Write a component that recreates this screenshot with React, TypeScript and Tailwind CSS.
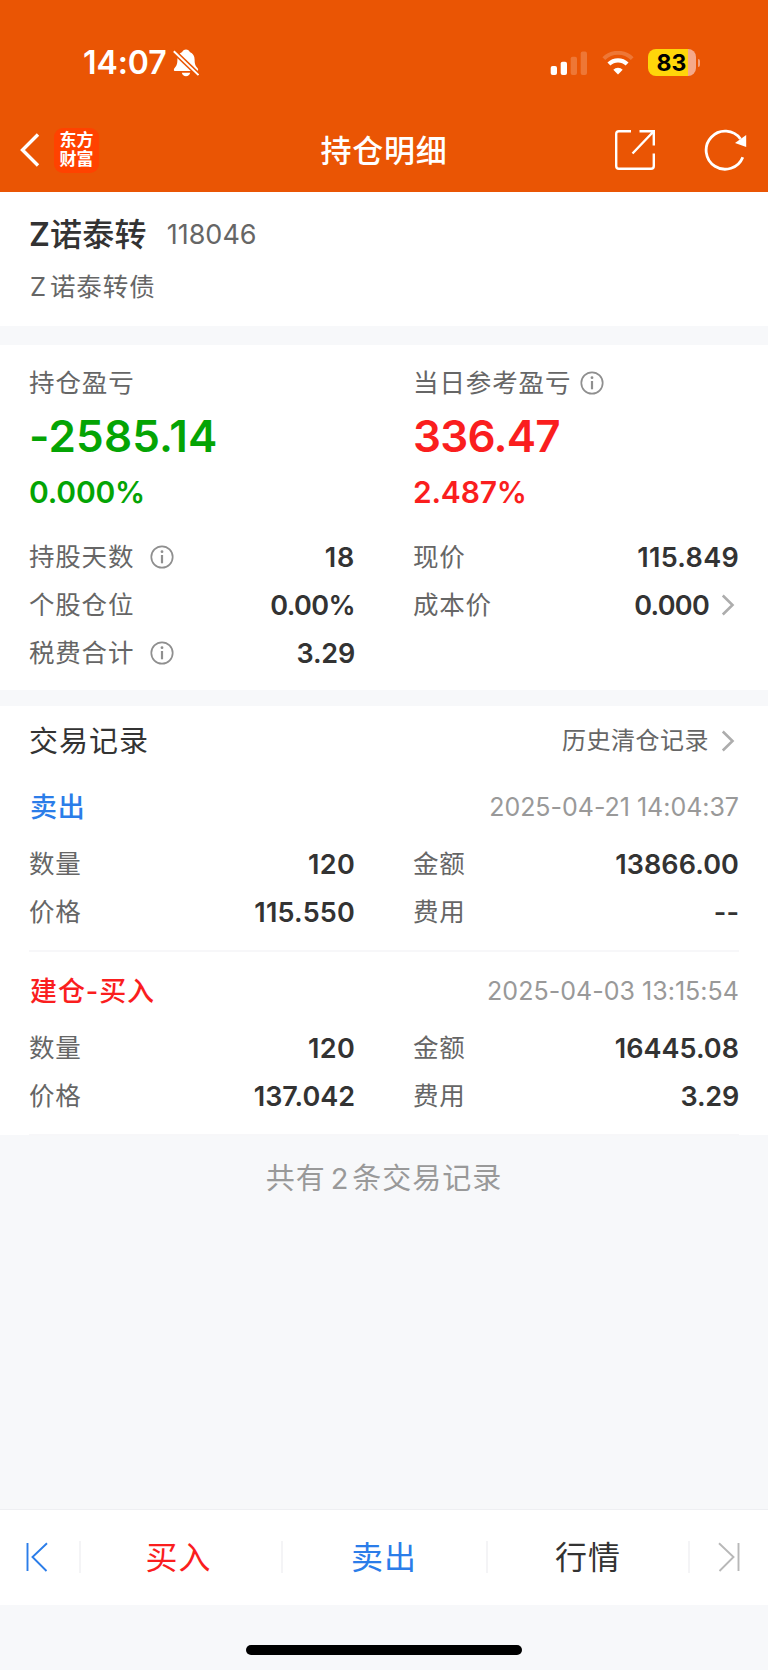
import type { ReactNode } from 'react';
import { clsx } from 'clsx';

interface FieldProps {
  label: string;
  value: string;
  info?: boolean;
  arrow?: boolean;
  valueClass?: string;
}

interface TradeProps {
  title: string;
  titleClass: string;
  time: string;
  timeClass: string;
  rows: FieldProps[];
}

const summary: FieldProps[] = [
  { label: '持股天数', value: '18', info: true, valueClass: 'tracking-[0.8px]' },
  { label: '现价', value: '115.849', valueClass: 'tracking-[0.3px]' },
  { label: '个股仓位', value: '0.00%', valueClass: 'tracking-[-0.6px]' },
  { label: '成本价', value: '0.000', arrow: true, valueClass: 'tracking-[-0.7px]' },
  { label: '税费合计', value: '3.29', info: true, valueClass: 'tracking-[-0.2px]' },
];

const trades: TradeProps[] = [
  {
    title: '卖出',
    titleClass: 'text-[#2b7de9] tracking-[0.8px]',
    time: '2025-04-21 14:04:37',
    timeClass: 'tracking-[-0.02px]',
    rows: [
      { label: '数量', value: '120', valueClass: 'tracking-[0.3px]' },
      { label: '金额', value: '13866.00', valueClass: 'tracking-[0.1px]' },
      { label: '价格', value: '115.550', valueClass: 'tracking-[0.2px]' },
      { label: '费用', value: '--' },
    ],
  },
  {
    title: '建仓-买入',
    titleClass: 'text-[#fa1e1e] tracking-[0.9px]',
    time: '2025-04-03 13:15:54',
    timeClass: 'tracking-[0.03px]',
    rows: [
      { label: '数量', value: '120', valueClass: 'tracking-[0.3px]' },
      { label: '金额', value: '16445.08', valueClass: 'tracking-[0.05px]' },
      { label: '价格', value: '137.042' },
      { label: '费用', value: '3.29', valueClass: 'tracking-[-0.2px]' },
    ],
  },
];

function InfoIcon({ className }: { className?: string }) {
  return (
    <svg viewBox="0 0 24 24" className={clsx('w-6 h-6 shrink-0', className)} fill="none" stroke="#8f8f8f">
      <circle cx="12" cy="12" r="10.7" strokeWidth="1.7" />
      <path d="M12 10v8.3" strokeWidth="2.2" />
      <circle cx="12" cy="6.7" r="1.4" fill="#8f8f8f" stroke="none" />
    </svg>
  );
}

function Chevron() {
  return (
    <svg viewBox="0 0 14 22" className="w-[14px] h-[22px] shrink-0" fill="none" stroke="#adadad" strokeWidth="2.6">
      <path d="M1.8 1.5 11.5 11 1.8 20.5" />
    </svg>
  );
}

function Field({ label, value, info, arrow, valueClass }: FieldProps) {
  return (
    <div className="flex h-12 items-center">
      <span className="text-[25.5px] tracking-[0.8px] text-[#666]">{label}</span>
      {info && <InfoIcon className="ml-4" />}
      <span className={clsx('ml-auto text-[27px] font-semibold text-[#333]', valueClass)}>{value}</span>
      {arrow && (
        <span className="ml-3 mr-1">
          <Chevron />
        </span>
      )}
    </div>
  );
}

function FieldGrid({ rows }: { rows: FieldProps[] }) {
  return (
    <div className="grid grid-cols-[326px_326px] justify-between">
      {rows.map((row) => (
        <Field key={row.label} {...row} />
      ))}
    </div>
  );
}

function Trade({ title, titleClass, time, timeClass, rows }: TradeProps) {
  return (
    <div className="h-[184px] border-b-2 border-[#f7f7f9] pt-[15px]">
      <div className="flex h-12 items-center justify-between">
        <span className={clsx('pl-px text-[27px] font-medium', titleClass)}>{title}</span>
        <span className={clsx('text-[25px] text-[#999]', timeClass)}>{time}</span>
      </div>
      <div className="pt-[9px]">
        <FieldGrid rows={rows} />
      </div>
    </div>
  );
}

function StatusBar() {
  return (
    <div className="flex h-[125px] items-center pl-[83px] pr-[68px]">
      <span className="w-[84px] pt-px text-[32px] font-semibold tracking-[-0.1px] whitespace-nowrap">14:07</span>
      <svg viewBox="0 0 26 28" className="ml-[6px] w-[26px] h-7" fill="#fff">
        <path d="M13 .5c-1.9 0-3.3 1-3.800 2.500C6 4.300 4.400 7 4.400 10.500c0 4.500-.8 6.300-2.600 8.300C.6 20.200.3 22 2 22h22c1.700 0 1.400-1.800.2-3.200-1.800-2-2.600-3.800-2.600-8.300 0-3.500-1.600-6.200-4.800-7.500C16.300 1.500 14.900.5 13 .5Z" />
        <path d="M8.800 23.800h8.400c-.5 2.100-2.100 3.400-4.200 3.400s-3.700-1.300-4.200-3.400Z" />
        <path d="M.8 2.200 25.500 26" stroke="#ea5504" strokeWidth="5" />
        <path d="M.8 2.200 25.500 26" stroke="#fff" strokeWidth="1.900" />
      </svg>
      <svg viewBox="0 0 38 24" className="ml-auto w-[38px] h-6" fill="#fff">
        <rect x=".7" y="15" width="6.300" height="9" rx="1.900" />
        <rect x="10.700" y="10.700" width="6.300" height="13.300" rx="1.900" />
        <rect x="20.700" y="5.700" width="6.300" height="18.300" rx="1.900" opacity=".2" />
        <rect x="30.700" y=".5" width="6.300" height="23.500" rx="1.900" opacity=".2" />
      </svg>
      <svg viewBox="0 0 32 24" className="ml-[14px] w-8 h-6" fill="none" stroke="#fff">
        <path d="M1.800 7.600a20.300 20.300 0 0 1 28.400 0" strokeWidth="4" opacity=".2" />
        <path d="M6.900 13a13 13 0 0 1 18.200 0" strokeWidth="4.200" />
        <path d="M16 23.600 11.300 18.800a6.700 6.700 0 0 1 9.400 0Z" fill="#fff" stroke="none" />
      </svg>
      <div className="ml-[14px] flex items-center">
        <div className="flex h-[27px] w-12 items-center justify-center overflow-hidden rounded-[8px] bg-linear-to-r from-[#ffd60a] from-[83%] to-[#f5a98a] to-[83%] pt-px pr-px text-[23px] font-bold text-black">
          83
        </div>
        <div className="ml-[2px] h-2 w-[2px] rounded-r-full bg-[#f3a07c]" />
      </div>
    </div>
  );
}

function NavBar() {
  return (
    <div className="grid h-[50px] grid-cols-3 items-center">
      <div className="flex items-center pl-5">
        <svg viewBox="0 0 20 34" className="w-5 h-[34px]" fill="none" stroke="#fff" strokeWidth="3.400">
          <path d="M18 1.500 2.500 17 18 32.500" />
        </svg>
        <div className="ml-[14px] flex h-[45px] w-[45px] flex-col items-center justify-center rounded-[9px] bg-[#ff4200] text-[17px] leading-[19px] font-bold">
          <span>东方</span>
          <span>财富</span>
        </div>
      </div>
      <h1 className="text-center text-[31px] font-medium tracking-[0.8px]">持仓明细</h1>
      <div className="flex items-center justify-end pr-[21px]">
        <svg viewBox="0 0 42 42" className="w-[42px] h-[42px]" fill="none" stroke="#fff" strokeWidth="2.400">
          <path d="M17 2.200H5a2.800 2.800 0 0 0-2.800 2.800v32A2.800 2.800 0 0 0 5 39.800h32a2.800 2.800 0 0 0 2.800-2.800V24.500" />
          <path d="M25.500 2.200h14.300V16.500M39.500 2.500 18.500 24.500" />
        </svg>
        <svg viewBox="0 0 43 42" className="ml-[48px] w-[43px] h-[42px]" fill="none" stroke="#fff" strokeWidth="2.800">
          <path d="M38.800 28.200A19 19 0 1 1 36.500 10" />
          <path d="M42.200 6v12L31 14Z" fill="#fff" stroke="none" />
        </svg>
      </div>
    </div>
  );
}

function Profit({ label, amount, percent, info, className, amountClass }: {
  label: string;
  amount: string;
  percent: string;
  info?: boolean;
  className: string;
  amountClass: string;
}) {
  return (
    <div>
      <div className="flex h-12 items-center text-[25.5px] tracking-[0.9px] text-[#666]">
        {label}
        {info && <InfoIcon className="ml-[9px]" />}
      </div>
      <div className={clsx('flex h-[58px] items-center text-[44px] font-semibold', className, amountClass)}>{amount}</div>
      <div className={clsx('flex h-[54px] items-center text-[30px] font-semibold tracking-[-0.2px]', className)}>{percent}</div>
    </div>
  );
}

function Tab({ className, children }: { className: string; children: ReactNode }) {
  return <div className={clsx('flex h-full items-center justify-center pt-[2px] text-[32px] tracking-[1px]', className)}>{children}</div>;
}

function Separator() {
  return <div className="h-8 w-[2px] shrink-0 bg-[#f4f4f6]" />;
}

export default function App() {
  return (
    <div className="flex h-[1670px] w-[768px] flex-col overflow-hidden bg-[#f7f8fa] font-[Inter,'Noto_Sans_CJK_SC',sans-serif] leading-none">
      {/* Header */}
      <header className="h-[192px] shrink-0 bg-[#ea5504] text-white">
        <StatusBar />
        <NavBar />
      </header>

      {/* Security name */}
      <section className="h-[134px] shrink-0 bg-white px-[29px] pt-[18px]">
        <div className="flex h-12 items-center">
          <span className="pt-px text-[32px] font-medium tracking-[0.2px] text-[#333]">
            <span className="font-semibold">Z</span>诺泰转
          </span>
          <span className="ml-5 text-[27px] text-[#666]">118046</span>
        </div>
        <div className="mt-1 flex h-12 items-center pt-px text-[25.5px] tracking-[0.9px] text-[#666]">
          <span className="mr-[3px] ml-px">Z</span>诺泰转债
        </div>
      </section>

      {/* Position profit */}
      <section className="mt-[19px] h-[345px] shrink-0 bg-white px-[29px] pt-[14px]">
        <div className="grid h-[174px] grid-cols-[326px_326px] justify-between">
          <Profit
            label="持仓盈亏"
            amount="-2585.14"
            percent="0.000%"
            className="text-[#04a404]"
            amountClass="tracking-[0.15px]"
          />
          <Profit
            label="当日参考盈亏"
            amount="336.47"
            percent="2.487%"
            info
            className="text-[#fa1e1e]"
            amountClass="tracking-[-0.75px]"
          />
        </div>
        <FieldGrid rows={summary} />
      </section>

      {/* Trade records */}
      <section className="mt-4 h-[429px] shrink-0 bg-white px-[29px] pt-[10px]">
        <div className="mb-[2px] flex h-[50px] items-center">
          <span className="text-[29px] tracking-[1px] text-[#333]">交易记录</span>
          <span className="ml-auto text-[24px] tracking-[0.5px] text-[#666]">历史清仓记录</span>
          <span className="ml-3 mr-1">
            <Chevron />
          </span>
        </div>
        {trades.map((trade) => (
          <Trade key={trade.time} {...trade} />
        ))}
      </section>

      <p className="mt-[19px] flex h-12 items-center justify-center text-[29px] tracking-[1px] text-[#999]">
        共有<span className="mr-[3px] ml-[5px]">2</span>条交易记录
      </p>

      {/* Bottom actions */}
      <footer className="mt-auto">
        <div className="flex h-24 items-center border-t border-[#eeeff2] bg-white pb-px">
          <div className="flex w-[79px] justify-center pr-[5px]">
            <svg viewBox="0 0 22 30" className="w-[22px] h-[30px]" fill="none" stroke="#2b7de9" strokeWidth="1.900">
              <path d="M1.500 1v28M21 1.200 6.500 15 20.500 29" />
            </svg>
          </div>
          <Separator />
          <Tab className="w-[200px] pr-[5px] text-[#fa1e1e]">买入</Tab>
          <Separator />
          <Tab className="w-[203px] pr-px text-[#2b7de9]">卖出</Tab>
          <Separator />
          <Tab className="w-[200px] text-[#333]">行情</Tab>
          <Separator />
          <div className="flex flex-1 justify-center">
            <svg viewBox="0 0 22 30" className="w-[22px] h-[30px]" fill="none" stroke="#b8b8b8" strokeWidth="1.900">
              <path d="M20.500 1v28M1 1.200 15.500 15 1.500 29" />
            </svg>
          </div>
        </div>
        <div className="flex h-[65px] justify-center pt-10">
          <div className="h-[10px] w-[276px] rounded-full bg-black" />
        </div>
      </footer>
    </div>
  );
}
